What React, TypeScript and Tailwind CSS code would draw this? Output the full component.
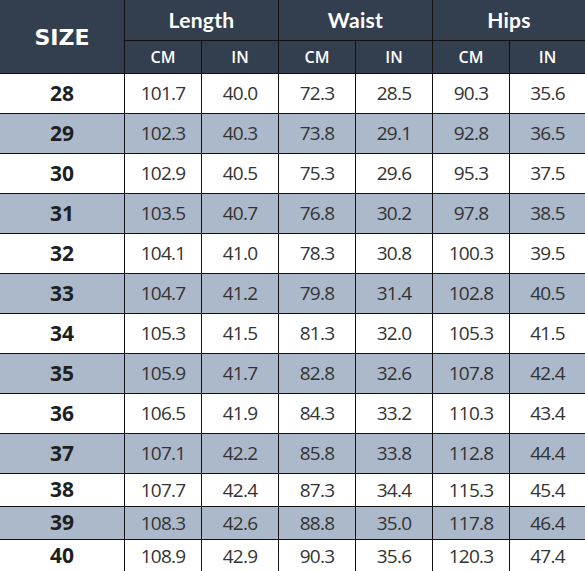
import React from "react";

const rows: string[][] = [
  ["28", "101.7", "40.0", "72.3", "28.5", "90.3", "35.6"],
  ["29", "102.3", "40.3", "73.8", "29.1", "92.8", "36.5"],
  ["30", "102.9", "40.5", "75.3", "29.6", "95.3", "37.5"],
  ["31", "103.5", "40.7", "76.8", "30.2", "97.8", "38.5"],
  ["32", "104.1", "41.0", "78.3", "30.8", "100.3", "39.5"],
  ["33", "104.7", "41.2", "79.8", "31.4", "102.8", "40.5"],
  ["34", "105.3", "41.5", "81.3", "32.0", "105.3", "41.5"],
  ["35", "105.9", "41.7", "82.8", "32.6", "107.8", "42.4"],
  ["36", "106.5", "41.9", "84.3", "33.2", "110.3", "43.4"],
  ["37", "107.1", "42.2", "85.8", "33.8", "112.8", "44.4"],
  ["38", "107.7", "42.4", "87.3", "34.4", "115.3", "45.4"],
  ["39", "108.3", "42.6", "88.8", "35.0", "117.8", "46.4"],
  ["40", "108.9", "42.9", "90.3", "35.6", "120.3", "47.4"],
];

const headFont = "font-['Comic_Sans_MS','Lato',sans-serif]";

export default function App() {
  return (
    <div className="w-[585px] h-[571px] overflow-hidden bg-white">
      <div className="grid w-[585px] grid-cols-[124px_repeat(5,76px)_1fr] grid-rows-[40px_32px_repeat(10,39px)_32px_32px_32px] gap-px bg-[#111]">
        <div className="row-span-2 bg-[#333f4f] flex items-center justify-center text-white font-['DejaVu_Sans',sans-serif] font-bold text-[22px] pt-[2px]">
          SIZE
        </div>
        {["Length", "Waist", "Hips"].map((t) => (
          <div
            key={t}
            className={`col-span-2 bg-[#333f4f] flex items-center justify-center text-white ${headFont} font-bold text-[21px] tracking-[0.3px]`}
          >
            {t}
          </div>
        ))}
        {["CM", "IN", "CM", "IN", "CM", "IN"].map((t, i) => (
          <div
            key={i}
            className="bg-[#333f4f] flex items-center justify-center text-white font-['Open_Sans',sans-serif] font-semibold text-[16px]"
          >
            {t}
          </div>
        ))}
        {rows.map((r, ri) => {
          const shaded = ri % 2 === 1;
          return r.map((v, ci) => (
            <div
              key={`${ri}-${ci}`}
              className={`flex items-center justify-center ${
                shaded ? "bg-[#acb9ca]" : "bg-white"
              } ${
                ci === 0
                  ? "font-['Open_Sans',sans-serif] font-bold text-[21px] text-[#1f1f1f]"
                  : "font-['Open_Sans',sans-serif] text-[19px] tracking-[-0.04em] text-[#333333]"
              }`}
            >
              {v}
            </div>
          ));
        })}
      </div>
    </div>
  );
}
